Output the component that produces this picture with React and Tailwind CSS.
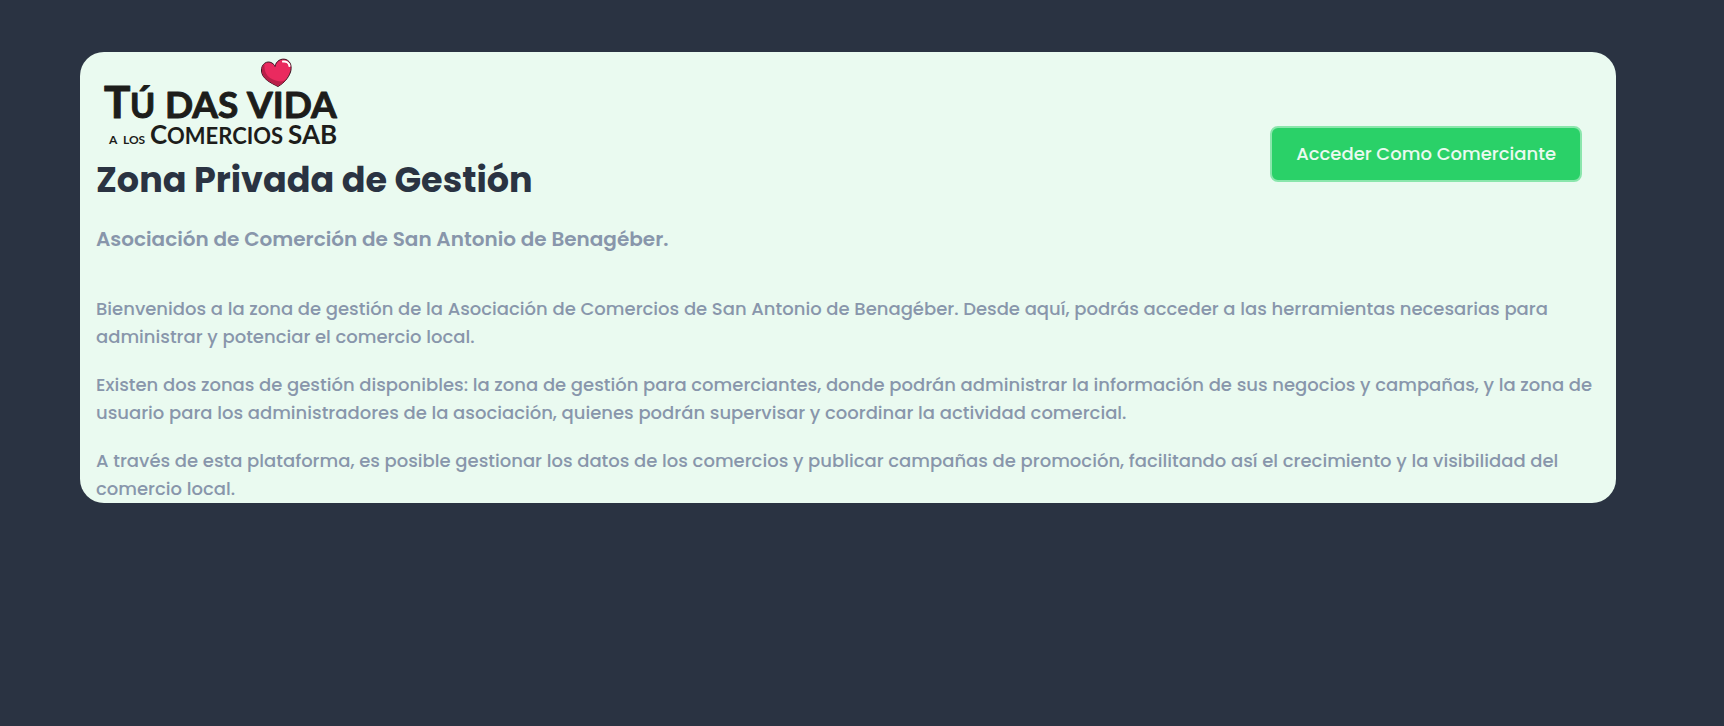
import React from "react";

const paragraphs = [
  "Bienvenidos a la zona de gestión de la Asociación de Comercios de San Antonio de Benagéber. Desde aquí, podrás acceder a las herramientas necesarias para administrar y potenciar el comercio local.",
  "Existen dos zonas de gestión disponibles: la zona de gestión para comerciantes, donde podrán administrar la información de sus negocios y campañas, y la zona de usuario para los administradores de la asociación, quienes podrán supervisar y coordinar la actividad comercial.",
  "A través de esta plataforma, es posible gestionar los datos de los comercios y publicar campañas de promoción, facilitando así el crecimiento y la visibilidad del comercio local.",
];

const Logo = () => (
  <svg
    viewBox="0 0 250 100"
    className="block h-[100px] w-[250px] font-[Lato,sans-serif] font-bold"
    fill="#1d1d1b"
    role="img"
    aria-label="Tú das vida a los comercios SAB"
  >
    <text y="66" fontSize="37" stroke="#1d1d1b" strokeLinejoin="round">
      <tspan x="8" fontSize="44">T</tspan>
      <tspan x="34" fontSize="34">Ú</tspan>
      <tspan x="69">DAS</tspan>
      <tspan x="151">VIDA</tspan>
    </text>
    <text y="92" fontSize="22">
      <tspan x="13" fontSize="12">A</tspan>
      <tspan x="27" fontSize="12">LOS</tspan>
      <tspan x="54" fontSize="26">C</tspan>
      <tspan x="71">OMERCIOS</tspan>
      <tspan x="192" fontSize="26">SAB</tspan>
    </text>
    <path
      d="M182 34.5C175 31 166 27 165.500 19C165 12 171 8 176 11C177.500 12 178.500 13 179 14.500C180 9 185 6 190 7.500C195 9.500 196 15 194.500 20C192.500 26 188 31 182 34.500Z"
      fill="#ea2a5f"
      stroke="#3c1522"
      strokeWidth="1"
    />
    <path
      d="M182 34C175 30.500 166.500 27 166 19C166 16 167 13.500 168.500 12C167.500 22 173 28 184.500 29.500C187 29.500 189 28 190.500 27C188 30 185.500 32.500 182 34Z"
      fill="#b91f49"
    />
    <path
      d="M187 9.500C190 9 193 10.500 193.500 14"
      fill="none"
      stroke="#ffffff"
      strokeWidth="2"
      strokeLinecap="round"
    />
  </svg>
);

const App = () => {
  return (
    <div className="min-h-screen bg-[#2a3342] pt-13 pr-27 pl-20 font-[Poppins,Inter,sans-serif]">
      <section className="rounded-3xl bg-[#eafaf0] px-4">
        <div className="flex flex-wrap items-center justify-between">
          <div>
            <Logo />
            <h1 className="mt-1 text-[35px] leading-12 font-bold text-[#2a3342]">
              Zona Privada de Gestión
            </h1>
            <h2 className="mt-[19px] text-xl leading-8 font-semibold text-[#8896ab]">
              Asociación de Comerción de San Antonio de Benagéber.
            </h2>
          </div>
          <button
            type="button"
            className="mr-[18px] rounded-lg border-2 border-[#8ae6ac] bg-[#2ad168] px-6 py-3 text-lg leading-7 font-medium text-[#eafaf0]"
          >
            Acceder Como Comerciante
          </button>
        </div>
        <div className="mt-10 space-y-5 text-lg leading-7 font-medium text-[#8896ab]">
          {paragraphs.map((text, index) => (
            <p key={index}>{text}</p>
          ))}
        </div>
      </section>
    </div>
  );
};

export default App;
